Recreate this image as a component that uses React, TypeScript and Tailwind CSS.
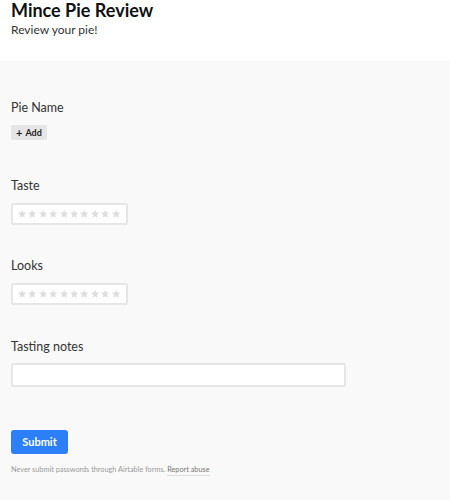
import React from 'react';

const Star = () => (
  <svg viewBox="0 0 24 24" className="h-[10px] w-[10.4px]" fill="#dedede">
    <path d="M12 2l2.9 6.5 7.1.7-5.4 4.8 1.6 7L12 17.3 5.8 21l1.6-7L2 9.2l7.1-.7z" />
  </svg>
);

const Rating = () => (
  <div className="mt-[8px] flex h-[22px] w-[117px] items-center rounded-[2px] border-2 border-[#e6e6e6] bg-white pl-[4px]">
    {Array.from({ length: 10 }).map((_, i) => (
      <Star key={i} />
    ))}
  </div>
);

const Label: React.FC<{ children: React.ReactNode }> = ({ children }) => (
  <div className="text-[12.5px] leading-[18px] text-[#333333]">{children}</div>
);

const App: React.FC = () => {
  return (
    <div className="min-h-[500px] bg-[#f9f9f9] font-['Lato',sans-serif]">
      {/* Cabecera */}
      <div className="h-[61px] bg-white px-[11px] pt-[1px]">
        <h1 className="text-[18px] font-bold leading-[18px] text-[#111111]">
          Mince Pie Review
        </h1>
        <p className="mt-[3px] text-[12px] leading-[16px] text-[#333333]">Review your pie!</p>
      </div>

      <div className="px-[11px] pt-[38px]">
        <Label>Pie Name</Label>
        <button className="mt-[8px] flex h-[15px] items-center gap-[3px] rounded-[2px] bg-[#e5e5e5] px-[5px] text-[9px] font-bold text-[#222222]">
          <span className="text-[11px] font-bold leading-none">+</span>
          Add
        </button>

        <div className="mt-[37px]">
          <Label>Taste</Label>
          <Rating />
        </div>

        <div className="mt-[32px]">
          <Label>Looks</Label>
          <Rating />
        </div>

        <div className="mt-[33px]">
          <Label>Tasting notes</Label>
          <input
            type="text"
            className="mt-[7px] block h-[24px] w-[335px] rounded-[2px] border-2 border-[#e6e6e6] bg-white outline-none"
          />
        </div>

        <button className="mt-[43px] flex h-[24px] w-[57px] items-center justify-center rounded-[3px] bg-[#2d7ff9] text-[11px] font-bold text-white">
          Submit
        </button>

        <p className="mt-[10px] text-[7.3px] leading-[12px] text-[#999999]">
          Never submit passwords through Airtable forms.{' '}
          <span className="border-b border-[#dddddd] pb-[1px] text-[#777777]">Report abuse</span>
        </p>
      </div>
    </div>
  );
};

export default App;
